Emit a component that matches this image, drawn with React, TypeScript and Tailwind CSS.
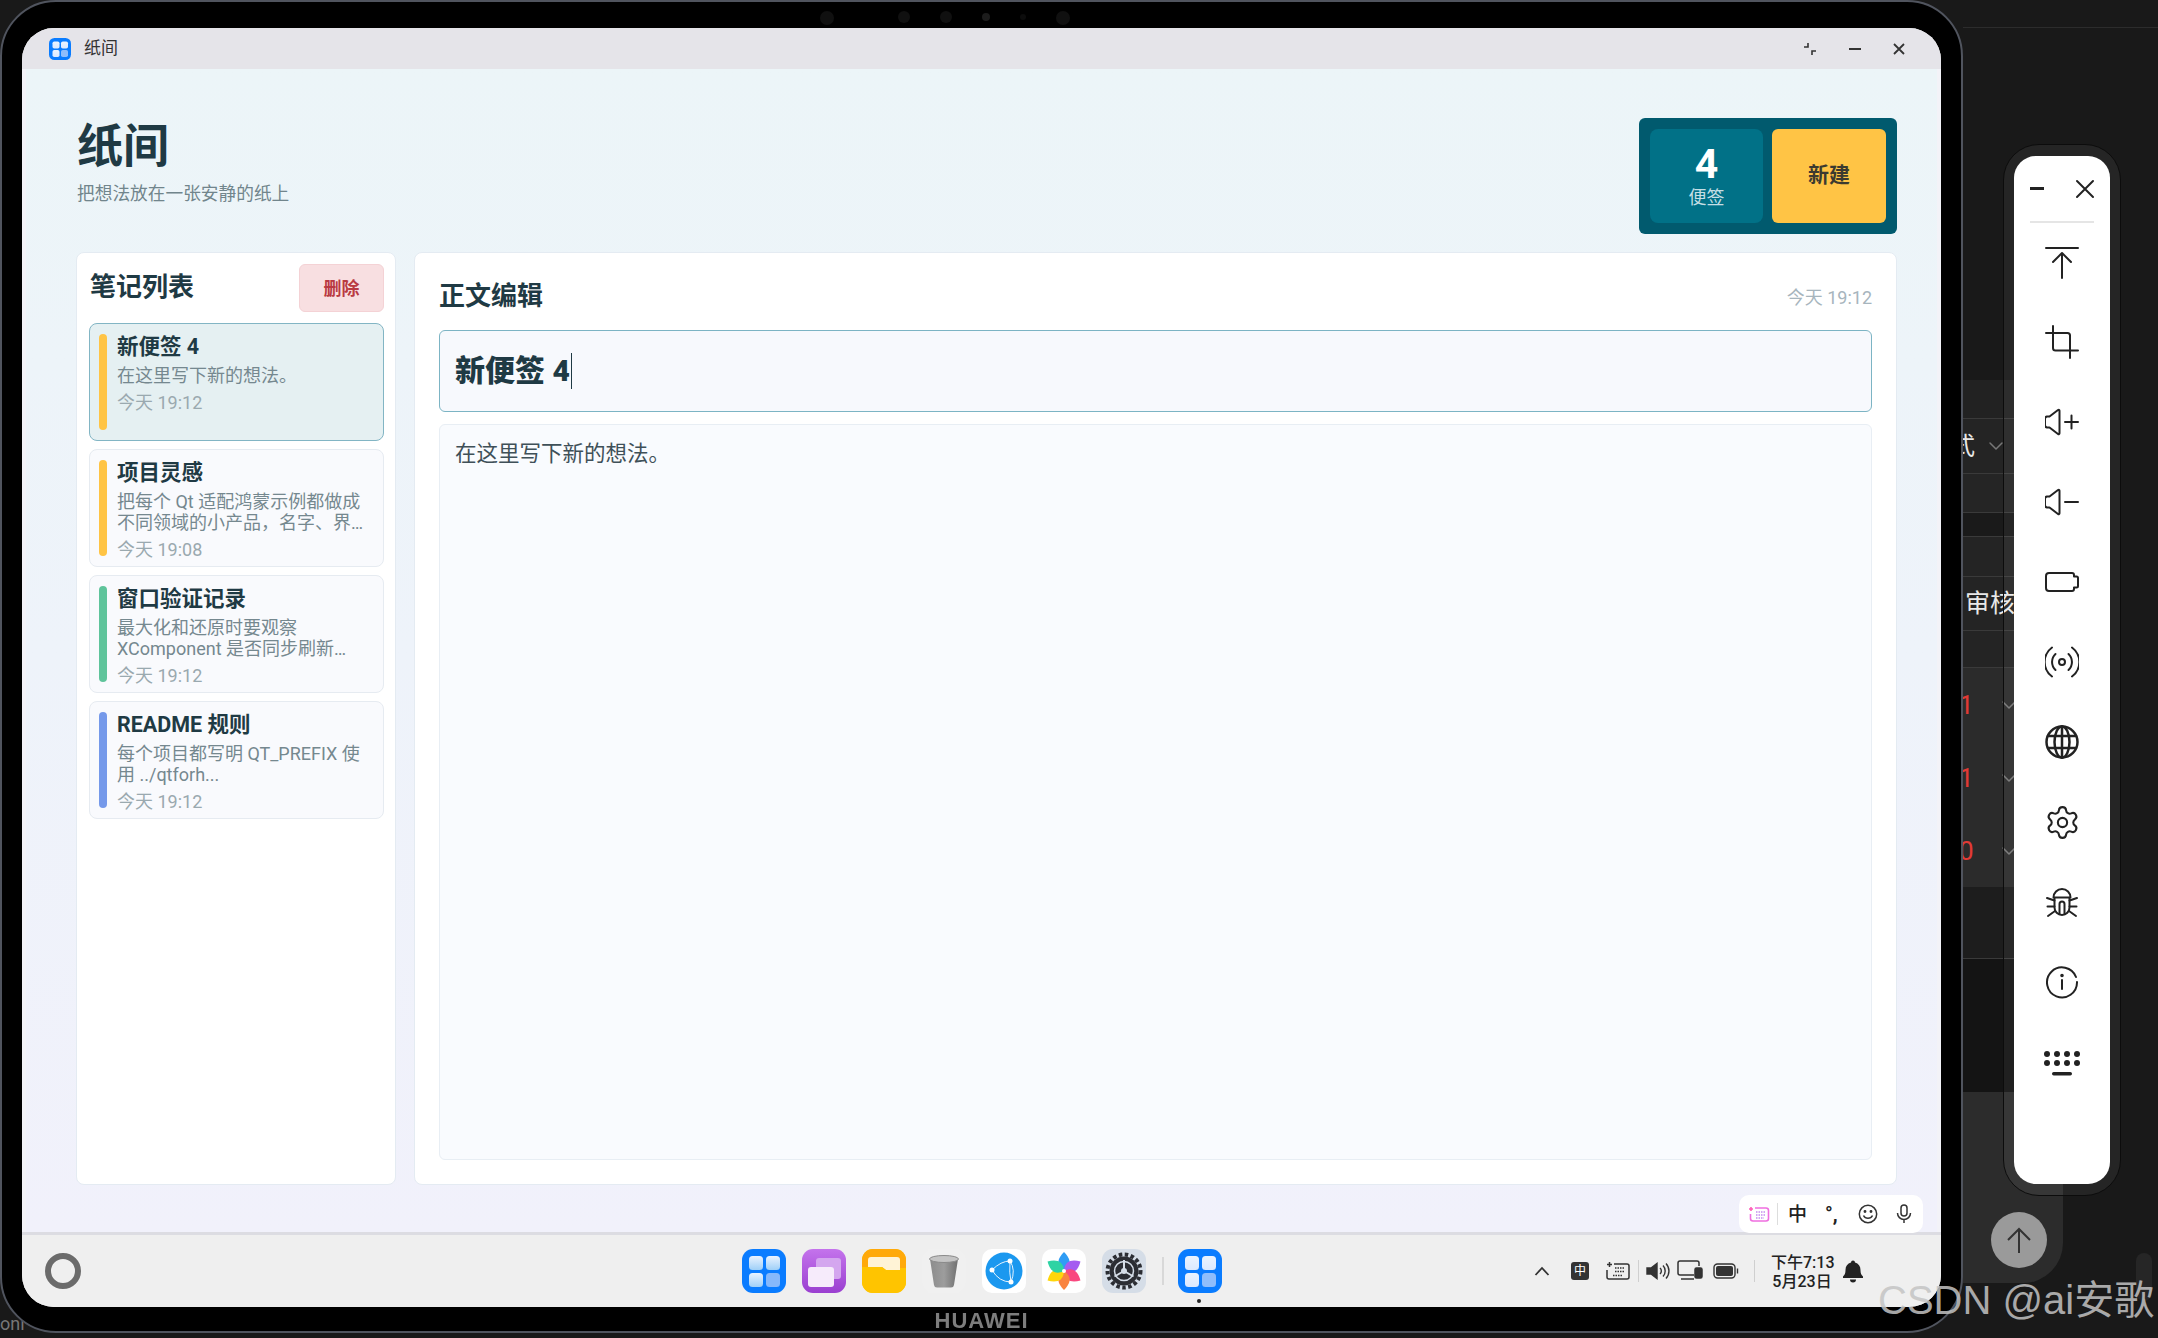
import { ChevronDown, Settings } from 'lucide-react'

const notes = [
  { title: '新便签 4', lines: ['在这里写下新的想法。'], time: '今天 19:12', bar: 'bg-[#ffc445]', active: true },
  { title: '项目灵感', lines: ['把每个 Qt 适配鸿蒙示例都做成', '不同领域的小产品，名字、界…'], time: '今天 19:08', bar: 'bg-[#ffc445]', active: false },
  { title: '窗口验证记录', lines: ['最大化和还原时要观察', 'XComponent 是否同步刷新…'], time: '今天 19:12', bar: 'bg-[#5fc49b]', active: false },
  { title: 'README 规则', lines: ['每个项目都写明 QT_PREFIX 使', '用 ../qtforh...'], time: '今天 19:12', bar: 'bg-[#7599ea]', active: false },
]

function NoteItem({ note }: { note: (typeof notes)[number] }) {
  return (
    <div className={`h-[118px] rounded-[8px] border pl-[9px] pr-[6px] py-[10px] flex gap-[10px] ${note.active ? 'bg-[#e5f0f2] border-[#82b5c4] border-[1.5px]' : 'bg-[#f9fafd] border-[#e6ebf1]'}`}>
      <div className={`w-[8px] rounded-full shrink-0 ${note.bar}`} />
      <div className="min-w-0">
        <div className="text-[21.5px] leading-[26px] font-bold text-[#1f3a44] whitespace-nowrap">{note.title}</div>
        <div className="mt-[5px] text-[18px] leading-[21px] text-[#75888f] whitespace-nowrap">
          {note.lines.map((l) => (
            <div key={l}>{l}</div>
          ))}
        </div>
        <div className="mt-[6px] text-[18px] leading-[21px] text-[#9aa9af] whitespace-nowrap">{note.time}</div>
      </div>
    </div>
  )
}

function AppGrid({ size = 44, soft = false }: { size?: number; soft?: boolean }) {
  return (
    <svg width={size} height={size} viewBox="0 0 44 44">
      <defs>
        <linearGradient id={soft ? 'paneA' : 'paneB'} x1="0" y1="0" x2="0" y2="1">
          <stop offset="0" stopColor="#eaf3ff" />
          <stop offset="1" stopColor={soft ? '#dbe9ff' : '#9fd0f8'} />
        </linearGradient>
      </defs>
      <rect width="44" height="44" rx="11" fill="#0a7cff" />
      <rect x="7" y="7" width="14" height="14" rx="3.5" fill={`url(#${soft ? 'paneA' : 'paneB'})`} />
      <rect x="24" y="7" width="14" height="14" rx="3.5" fill={`url(#${soft ? 'paneA' : 'paneB'})`} />
      <rect x="7" y="24" width="14" height="14" rx="3.5" fill={`url(#${soft ? 'paneA' : 'paneB'})`} />
      <rect x="24" y="24" width="14" height="14" rx="3.5" fill={soft ? '#8fbdfb' : '#86b8fb'} />
    </svg>
  )
}

function DockIcons() {
  return (
    <>
      <AppGrid />
      <svg width="44" height="44" viewBox="0 0 44 44">
        <defs>
          <linearGradient id="pur" x1="0" y1="0" x2="0" y2="1">
            <stop offset="0" stopColor="#c473ec" />
            <stop offset="1" stopColor="#9a3fd0" />
          </linearGradient>
        </defs>
        <rect width="44" height="44" rx="11" fill="url(#pur)" />
        <rect x="14" y="9" width="25" height="21" rx="3" fill="#d4a6ef" />
        <rect x="6" y="18" width="26" height="20" rx="3" fill="#f6ebfb" />
      </svg>
      <svg width="44" height="44" viewBox="0 0 44 44">
        <rect width="44" height="44" rx="11" fill="#ffc400" />
        <path d="M0 11a11 11 0 0 1 11-11h22a11 11 0 0 1 11 11v8H0z" fill="#ffa90a" />
        <path d="M6 18V11a3 3 0 0 1 3-3h26a3 3 0 0 1 3 3v10H24l-4-3z" fill="#fff3d6" />
        <path d="M0 18h20l4 3h20v12a11 11 0 0 1-11 11H11A11 11 0 0 1 0 33z" fill="#ffc400" />
      </svg>
      <svg width="44" height="44" viewBox="0 0 44 44">
        <defs>
          <linearGradient id="can" x1="0" y1="0" x2="1" y2="0">
            <stop offset="0" stopColor="#8c8c8c" />
            <stop offset="0.5" stopColor="#9d9d9d" />
            <stop offset="1" stopColor="#6f6f6f" />
          </linearGradient>
        </defs>
        <rect width="44" height="44" rx="11" fill="#f0f0f0" />
        <path d="M8 10l4 26a3 3 0 0 0 3 2.500h14a3 3 0 0 0 3-2.500l4-26z" fill="url(#can)" />
        <ellipse cx="22" cy="10" rx="14.500" ry="3.500" fill="#c4c4c4" stroke="#8a8a8a" strokeWidth="1" />
      </svg>
      <svg width="44" height="44" viewBox="0 0 44 44">
        <rect width="44" height="44" rx="10" fill="#fff" />
        <circle cx="22" cy="22" r="18.500" fill="#1b98ef" />
        <path d="M10 21Q19 12 28 12Q34 21 29 33Q17 33 10 21zM28 12Q27 24 29 33" fill="none" stroke="#e6f4ff" strokeWidth="1" />
        <circle cx="28" cy="12" r="2.500" fill="#fff" />
        <circle cx="10" cy="21" r="2.500" fill="#fff" />
        <circle cx="29" cy="33" r="2.500" fill="#fff" />
      </svg>
      <svg width="44" height="44" viewBox="0 0 44 44">
        <rect width="44" height="44" rx="10" fill="#fff" />
        <g transform="translate(22 22)">
          <path d="M0 0C-9 -6 -6 -13 0 -19C6 -13 9 -6 0 0z" fill="#2f9cf4" />
          <path d="M0 0C-9 -6 -6 -13 0 -19C6 -13 9 -6 0 0z" fill="#a55cf0" transform="rotate(60)" />
          <path d="M0 0C-9 -6 -6 -13 0 -19C6 -13 9 -6 0 0z" fill="#f9487f" transform="rotate(120)" />
          <path d="M0 0C-9 -6 -6 -13 0 -19C6 -13 9 -6 0 0z" fill="#f98440" transform="rotate(180)" />
          <path d="M0 0C-9 -6 -6 -13 0 -19C6 -13 9 -6 0 0z" fill="#ffd60a" transform="rotate(240)" />
          <path d="M0 0C-9 -6 -6 -13 0 -19C6 -13 9 -6 0 0z" fill="#2ed3a4" transform="rotate(300)" />
          <circle r="2" fill="#fff" />
        </g>
      </svg>
      <svg width="44" height="44" viewBox="0 0 44 44">
        <rect width="44" height="44" rx="11" fill="#d5dde7" />
        <circle cx="22" cy="22" r="16.500" fill="none" stroke="#2b2d33" strokeWidth="4" strokeDasharray="3.500 2.500" />
        <circle cx="22" cy="22" r="14.500" fill="#2b2d33" />
        <circle cx="22" cy="22" r="9.500" fill="none" stroke="#d5dde7" strokeWidth="1.500" />
        <path d="M22 22V11M22 22l-9.500 5.500M22 22l9.500 5.500" stroke="#d5dde7" strokeWidth="2" />
        <circle cx="22" cy="22" r="3" fill="#d5dde7" />
      </svg>
    </>
  )
}

const toolPaths: React.ReactNode[] = [
  <>
    <path d="M1 3h32" />
    <path d="M17 33V8M8 17l9-9 9 9" />
  </>,
  <path d="M8 1v22a2.500 2.500 0 0 0 2.500 2.500H33M1 8h21.500A2.500 2.500 0 0 1 25 10.500V33" />,
  <>
    <path d="M4 11.500h2.500L15 5c.8-.6 1.500-.2 1.500.7v22.600c0 .9-.7 1.300-1.500.7l-8.500-6.500H4a2.500 2.500 0 0 1-2-2.500v-6a2.500 2.500 0 0 1 2-2.500z" transform="translate(-2 0)" />
    <path d="M20 17h13M26.500 10.500v13" />
  </>,
  <>
    <path d="M4 11.500h2.500L15 5c.8-.6 1.500-.2 1.500.7v22.600c0 .9-.7 1.300-1.500.7l-8.500-6.500H4a2.500 2.500 0 0 1-2-2.500v-6a2.500 2.500 0 0 1 2-2.500z" transform="translate(-2 0)" />
    <path d="M20 17h13" />
  </>,
  <>
    <path d="M4 8h23a2 2 0 0 1 2 2v1.500h2.500a1.500 1.500 0 0 1 1.500 1.500v8a1.500 1.500 0 0 1-1.500 1.500H29V24a2 2 0 0 1-2 2H4a3 3 0 0 1-3-3V11a3 3 0 0 1 3-3z" />
  </>,
  <>
    <circle cx="17" cy="17" r="3" />
    <path d="M10.500 9a11 11 0 0 0 0 16M23.500 9a11 11 0 0 1 0 16" />
    <path d="M7 2.500a18 18 0 0 0 0 29M27 2.500a18 18 0 0 1 0 29" />
  </>,
  <g strokeWidth="2.500">
    <circle cx="17" cy="17" r="15.500" />
    <ellipse cx="17" cy="17" rx="7.500" ry="15.500" />
    <path d="M17 1.500v31M3 11h28M3 23h28" />
  </g>,
  null,
  <>
    <path d="M8.500 12.500a8.500 8.500 0 0 1 17 0zM9.500 12.500v10a7.500 7.500 0 0 0 15 0v-10" />
    <path d="M14.500 29v-10a2.500 2.500 0 0 1 5 0v10" />
    <path d="M9.500 15.500L2 13M24.500 15.500L32 13M9.500 21.500H2.500M24.500 21.500H31.500M10 26L3 31M24 26l7 5" />
  </>,
  <>
    <path d="M31 12a15 15 0 1 0 1 5" />
    <path d="M17 15v9" />
    <circle cx="17" cy="10.500" r="0.800" fill="#222" />
  </>,
  null,
]

function ToolIcon({ index }: { index: number }) {
  if (index === 7) return <Settings className="w-[37px] h-[37px] text-[#222]" strokeWidth={1.35} />
  if (index === 10) {
    return (
      <svg className="mt-[4px]" width="38" height="28" viewBox="0 0 38 28" fill="#222">
        {[4, 14, 24, 34].map((x) => (
          <circle key={x} cx={x} cy="4" r="3" />
        ))}
        {[4, 14, 24, 34].map((x) => (
          <circle key={x} cx={x} cy="13" r="3" />
        ))}
        <rect x="9" y="22" width="20" height="3.500" rx="1.700" />
      </svg>
    )
  }
  return (
    <svg width="34" height="34" viewBox="0 0 34 34" fill="none" stroke="#222" strokeWidth="2" strokeLinecap="round" strokeLinejoin="round">
      {toolPaths[index]}
    </svg>
  )
}

function BgRow({ className, children }: { className: string; children?: React.ReactNode }) {
  return <div className={`w-[100px] border-b border-[#3a3a3a] flex items-center overflow-hidden ${className}`}>{children}</div>
}

function RedRow({ glyph }: { glyph: string }) {
  return (
    <div className="h-[73px] flex items-center justify-between pr-[42px]">
      <span className="text-[#e23a35] text-[26px] leading-none -ml-[4px]">{glyph}</span>
      <ChevronDown className="w-[24px] h-[24px] text-[#777]" strokeWidth={1.5} />
    </div>
  )
}

export default function App() {
  return (
    <div className="relative w-[2158px] h-[1338px] overflow-hidden bg-[#191919] flex font-[Roboto,'Noto_Sans_CJK_SC',sans-serif]">
      {/* tablet */}
      <div className="relative z-10 shrink-0 w-[1963px] h-[1333px] bg-black rounded-[56px] border-2 border-[#50545e] pt-[26px] px-[20px] pb-[24px]">
        <div className="absolute top-[9px] left-0 right-0 pr-[74px] flex justify-center gap-[30px]">
          <div className="w-[14px] h-[14px] rounded-full bg-[#101010] mr-[34px]" />
          <div className="w-[12px] h-[12px] rounded-full bg-[#101010]" />
          <div className="w-[12px] h-[12px] rounded-full bg-[#101010]" />
          <div className="w-[8px] h-[8px] rounded-full bg-[#1c1c1c] mt-[2px]" />
          <div className="w-[6px] h-[6px] rounded-full bg-[#0c0c0c] mt-[3px]" />
          <div className="w-[14px] h-[14px] rounded-full bg-[#101010]" />
        </div>

        <div className="h-full rounded-[32px] overflow-hidden flex flex-col bg-[#efefef]">
          {/* title bar */}
          <div className="h-[41px] shrink-0 bg-[#e5e4e9] flex items-center">
            <div className="ml-[27px]">
              <AppGrid size={22} soft />
            </div>
            <span className="ml-[13px] mt-px text-[17px] text-[#333]">纸间</span>
            <div className="ml-auto flex items-center text-[#333]">
              <svg width="16" height="16" viewBox="0 0 16 16" fill="none" stroke="#333" strokeWidth="1.600">
                <path d="M2 6h4V2M14 10h-4v4" />
              </svg>
              <svg className="ml-[29px]" width="16" height="16" viewBox="0 0 16 16" fill="none" stroke="#333" strokeWidth="1.800">
                <path d="M2 8h12" />
              </svg>
              <svg className="ml-[28px] mr-[34px]" width="16" height="16" viewBox="0 0 16 16" fill="none" stroke="#333" strokeWidth="1.800">
                <path d="M3 3l10 10M13 3L3 13" />
              </svg>
            </div>
          </div>

          {/* app content */}
          <div className="relative h-[1163px] shrink-0 px-[4px] bg-[#f3f3f8]">
            <div className="h-full bg-linear-to-b from-[#ecf5f8] via-[#eef3fa] to-[#f1f1fb] pl-[50px] pr-[40px] pt-[49px] flex flex-col">
              <div className="flex justify-between items-start">
                <div className="pl-px">
                  <h1 className="text-[46px] leading-[56px] font-bold text-[#1f3a44]">纸间</h1>
                  <p className="mt-[8px] text-[17.7px] leading-[24px] text-[#71858c]">把想法放在一张安静的纸上</p>
                </div>
                <div className="w-[258px] h-[116px] rounded-[6px] bg-[#015a6e] p-[11px] flex gap-[9px]">
                  <div className="w-[113px] rounded-[8px] bg-[#017187] flex flex-col items-center">
                    <div className="mt-[12px] text-[41px] leading-[46px] font-bold text-white">4</div>
                    <div className="-mt-px text-[18px] leading-[24px] text-[#c5dfe5]">便签</div>
                  </div>
                  <button className="w-[114px] rounded-[6px] bg-[#ffc445] text-[21px] font-bold text-[#3b3a30]">新建</button>
                </div>
              </div>

              <div className="mt-[18px] h-[933px] flex gap-[18px]">
                <div className="w-[320px] shrink-0 rounded-[8px] bg-white border border-[#e4ebf2] pl-[12px] pr-[11px] pt-[11px]">
                  <div className="h-[48px] flex items-center justify-between">
                    <h2 className="pl-px -mt-px text-[26px] font-bold text-[#1f3a44]">笔记列表</h2>
                    <button className="w-[85px] h-[48px] rounded-[6px] bg-[#f8dfe1] border border-[#f4d2d5] text-[18px] font-bold text-[#b93a42]">删除</button>
                  </div>
                  <div className="mt-[11px] flex flex-col gap-[8px]">
                    {notes.map((n) => (
                      <NoteItem key={n.title} note={n} />
                    ))}
                  </div>
                </div>

                <div className="flex-1 rounded-[8px] bg-white border border-[#e4ebf2] pl-[24px] pr-[24px] pb-[24px] flex flex-col">
                  <div className="h-[77px] shrink-0 flex items-center justify-between">
                    <h2 className="mt-[10px] text-[26px] font-bold text-[#1f3a44]">正文编辑</h2>
                    <span className="mt-[11px] text-[18px] text-[#a7b5bd]">今天 19:12</span>
                  </div>
                  <div className="h-[82px] shrink-0 rounded-[6px] bg-[#f7f9fd] border-[1.5px] border-[#7cb4c4] pl-[15px] flex items-center">
                    <span className="-mt-[2px] text-[30px] font-black text-[#1f3a44]">新便签 4</span>
                    <span className="ml-[1px] w-[1.5px] h-[36px] bg-[#1f3a44]" />
                  </div>
                  <div className="mt-[12px] flex-1 rounded-[6px] bg-[#f9fbfe] border border-[#e8eef4] pl-[15px] pt-[14px] text-[21.5px] leading-[30px] text-[#3f5058]">
                    在这里写下新的想法。
                  </div>
                </div>
              </div>
            </div>

            {/* input method bar */}
            <div className="absolute right-[18px] -bottom-[1px] w-[184px] h-[38px] rounded-[10px] bg-white flex items-center">
              <svg className="ml-[9px]" width="22" height="18" viewBox="0 0 22 18" fill="none" stroke="#ef6fe0" strokeWidth="1.600">
                <path d="M7 3h11a2.500 2.500 0 0 1 2.500 2.500v8A2.500 2.500 0 0 1 18 16H5a2.500 2.500 0 0 1-2.500-2.500V9" />
                <path d="M8 7h9M8 10h9M8 13h8" stroke="#c58cf0" strokeDasharray="1.500 1" />
                <path d="M3 2v4M1 4h4" stroke="#ff5fb8" />
              </svg>
              <div className="ml-[7px] w-px h-[22px] bg-[#dddddd]" />
              <span className="ml-[10px] text-[19px] leading-none font-medium text-[#222]">中</span>
              <span className="ml-[18px] w-[20px] text-[20px] leading-none font-bold text-[#222] whitespace-nowrap">°,</span>
              <svg className="ml-[13px]" width="20" height="20" viewBox="0 0 20 20" fill="none" stroke="#333" strokeWidth="1.500">
                <circle cx="10" cy="10" r="8.700" />
                <path d="M5.500 11.500a5 5 0 0 0 9 0" />
                <circle cx="7" cy="7.500" r="0.700" fill="#333" />
                <circle cx="13" cy="7.500" r="0.700" fill="#333" />
              </svg>
              <svg className="ml-[18px]" width="16" height="20" viewBox="0 0 16 20" fill="none" stroke="#333" strokeWidth="1.500">
                <rect x="5" y="1" width="6" height="11" rx="3" />
                <path d="M1.500 9a6.500 6.500 0 0 0 13 0M8 15.500V19" />
              </svg>
            </div>
          </div>

          <div className="h-[3px] shrink-0 bg-[#dcdce2]" />

          {/* taskbar */}
          <div className="h-[72px] shrink-0 bg-[#efefef] flex items-center">
            <div className="ml-[23px] w-[36px] h-[36px] rounded-full border-[6px] border-[#6b6b6b] blur-[0.6px]" />
            <div className="ml-[661px] flex items-center gap-[16px]">
              <DockIcons />
              <div className="w-[2px] h-[28px] -mr-[2px] bg-[#d8d8d8]" />
              <div className="relative h-[44px]">
                <AppGrid soft />
                <div className="absolute -bottom-[10px] left-[19px] w-[4px] h-[4px] rounded-full bg-[#222]" />
              </div>
            </div>

            <div className="ml-auto pr-[77px] flex items-center">
              <svg width="16" height="10" viewBox="0 0 16 10" fill="none" stroke="#333" strokeWidth="1.800">
                <path d="M1.500 9L8 2l6.500 7" />
              </svg>
              <div className="ml-[21px] w-[18px] h-[18px] rounded-[3px] bg-[#333] text-white text-[12px] leading-[18px] text-center">中</div>
              <svg className="ml-[17px]" width="24" height="20" viewBox="0 0 24 20" fill="none" stroke="#333" strokeWidth="1.500">
                <path d="M8 3h13a2 2 0 0 1 2 2v11a2 2 0 0 1-2 2H3a2 2 0 0 1-2-2V9" />
                <path d="M9 7h10M9 10.500h10M7 14.500h10" strokeDasharray="1.500 1" />
                <path d="M3.500 1v5M1 3.500h5" />
              </svg>
              <div className="ml-[8px] w-px h-[22px] bg-[#cfcfcf]" />
              <svg className="ml-[7px]" width="24" height="20" viewBox="0 0 24 20" fill="none" stroke="#333" strokeWidth="1.400">
                <path d="M1 7h4l6-4.500v15L5 13H1z" fill="#333" />
                <path d="M14 7a4 4 0 0 1 0 6M17 4.500a8 8 0 0 1 0 11M20 2.500a11 11 0 0 1 0 15" />
              </svg>
              <svg className="ml-[7px]" width="26" height="22" viewBox="0 0 26 22" fill="none" stroke="#333" strokeWidth="1.500">
                <path d="M17 15H3a2 2 0 0 1-2-2V3a2 2 0 0 1 2-2h17a2 2 0 0 1 2 2v3" />
                <path d="M4 19h13" />
                <rect x="18" y="8" width="7" height="10" rx="1.500" fill="#333" />
              </svg>
              <svg className="ml-[10px]" width="26" height="16" viewBox="0 0 26 16" fill="none" stroke="#333" strokeWidth="1.400">
                <rect x="1" y="1" width="21" height="14" rx="3.500" />
                <rect x="3" y="3" width="17" height="10" rx="2" fill="#333" stroke="none" />
                <path d="M24.500 5.500v5" />
              </svg>
              <div className="ml-[15px] w-px h-[22px] bg-[#cfcfcf]" />
              <div className="ml-[16px] mt-[2px] w-[62px] text-[16px] leading-[19px] font-medium text-[#222] text-center whitespace-nowrap">
                <div>下午7:13</div>
                <div>5月23日</div>
              </div>
              <svg className="ml-[9px]" width="22" height="24" viewBox="0 0 22 24" fill="#222">
                <path d="M11 1.500a2 2 0 0 1 2 2c3.500 1 5.500 3.700 5.500 7.500 0 3.500.8 5 2.500 6.500v1.500H1v-1.500c1.700-1.500 2.500-3 2.500-6.500 0-3.800 2-6.500 5.500-7.500a2 2 0 0 1 2-2z" />
                <path d="M8 20.500h6a3 3 0 0 1-6 0z" />
              </svg>
            </div>
          </div>
        </div>

        <div className="absolute -bottom-[1px] left-0 right-0 text-center text-[22px] leading-[22px] font-bold tracking-[1px] text-[#7d7d7d] blur-[0.7px] font-['Liberation_Sans',sans-serif]">HUAWEI</div>
      </div>

      {/* what shows of the window behind */}
      <div className="flex-1 flex flex-col">
        <div className="h-[380px] w-[195px] border-t border-[#2c2c2c] mt-[27px] -mb-[27px] bg-[#191919]" />
        <BgRow className="h-[39px] bg-[#222222]" />
        <BgRow className="h-[55px] bg-[#242424]">
          <span className="-ml-[12px] text-[24px] text-[#e8e8e8]">式</span>
          <ChevronDown className="ml-[9px] w-[24px] h-[24px] text-[#777]" strokeWidth={1.5} />
        </BgRow>
        <BgRow className="h-[39px] bg-[#252525]" />
        <BgRow className="h-[24px] bg-[#1a1a1a]" />
        <BgRow className="h-[40px] bg-[#242424]" />
        <BgRow className="h-[54px] bg-[#242424]">
          <span className="ml-[2px] text-[25px] leading-none text-[#e8e8e8] whitespace-nowrap">审核</span>
        </BgRow>
        <BgRow className="h-[37px] bg-[#242424]" />
        <div className="w-[100px] h-[219px] bg-[#2b2b2b] overflow-hidden">
          <RedRow glyph="1" />
          <RedRow glyph="1" />
          <RedRow glyph="0" />
        </div>
        <div className="w-[100px] h-[72px] bg-[#1d1d1d] border-b border-[#3a3a3a]" />
        <div className="w-[100px] h-[133px] bg-[#141414]" />
        <div className="w-[100px] h-[191px] bg-[#2c2c2c] rounded-br-[40px]" />
      </div>

      {/* floating tool panel */}
      <div className="absolute z-20 left-[2003px] top-[144px] w-[118px] h-[1052px] rounded-[36px] bg-white/5 border border-[#0c0c0c] px-[10px] py-[11px]">
        <div className="h-full rounded-[22px] bg-white flex flex-col items-center overflow-hidden">
          <div className="h-[65px] w-full flex items-center justify-between pl-[16px] pr-[15px] shrink-0">
            <div className="w-[14px] h-[3px] bg-[#222]" />
            <svg width="20" height="20" viewBox="0 0 20 20" fill="none" stroke="#222" strokeWidth="2" strokeLinecap="round">
              <path d="M2 2l16 16M18 2L2 18" />
            </svg>
          </div>
          <div className="h-[2px] w-[64px] bg-[#e5e5e5] shrink-0" />
          <div className="-mt-px flex flex-col items-center">
            {toolPaths.map((_, i) => (
              <div key={i} className="h-[80px] flex items-center justify-center">
                <ToolIcon index={i} />
              </div>
            ))}
          </div>
        </div>
      </div>

      <div className="absolute z-30 left-[1991px] top-[1212px] w-[56px] h-[56px] rounded-full bg-[#9a9a9a] flex items-center justify-center">
        <svg width="26" height="28" viewBox="0 0 26 28" fill="none" stroke="#333" strokeWidth="2">
          <path d="M13 27V3M2 14L13 3l11 11" />
        </svg>
      </div>
      <div className="absolute z-30 left-[2136px] top-[1253px] w-[16px] h-[48px] rounded-full bg-[#262626]" />

      {/* watermark and the sliver of text at the corner */}
      <div className="absolute z-40 left-[1878px] top-[1277px] text-[40px] leading-[46px] text-[#c4c4c4]/85 whitespace-nowrap font-['Liberation_Sans','Noto_Sans_CJK_SC',sans-serif]">CSDN @ai安歌</div>
      <div className="absolute z-0 left-0 top-[1314px] text-[18px] leading-[20px] text-[#777]">onl</div>
    </div>
  )
}
